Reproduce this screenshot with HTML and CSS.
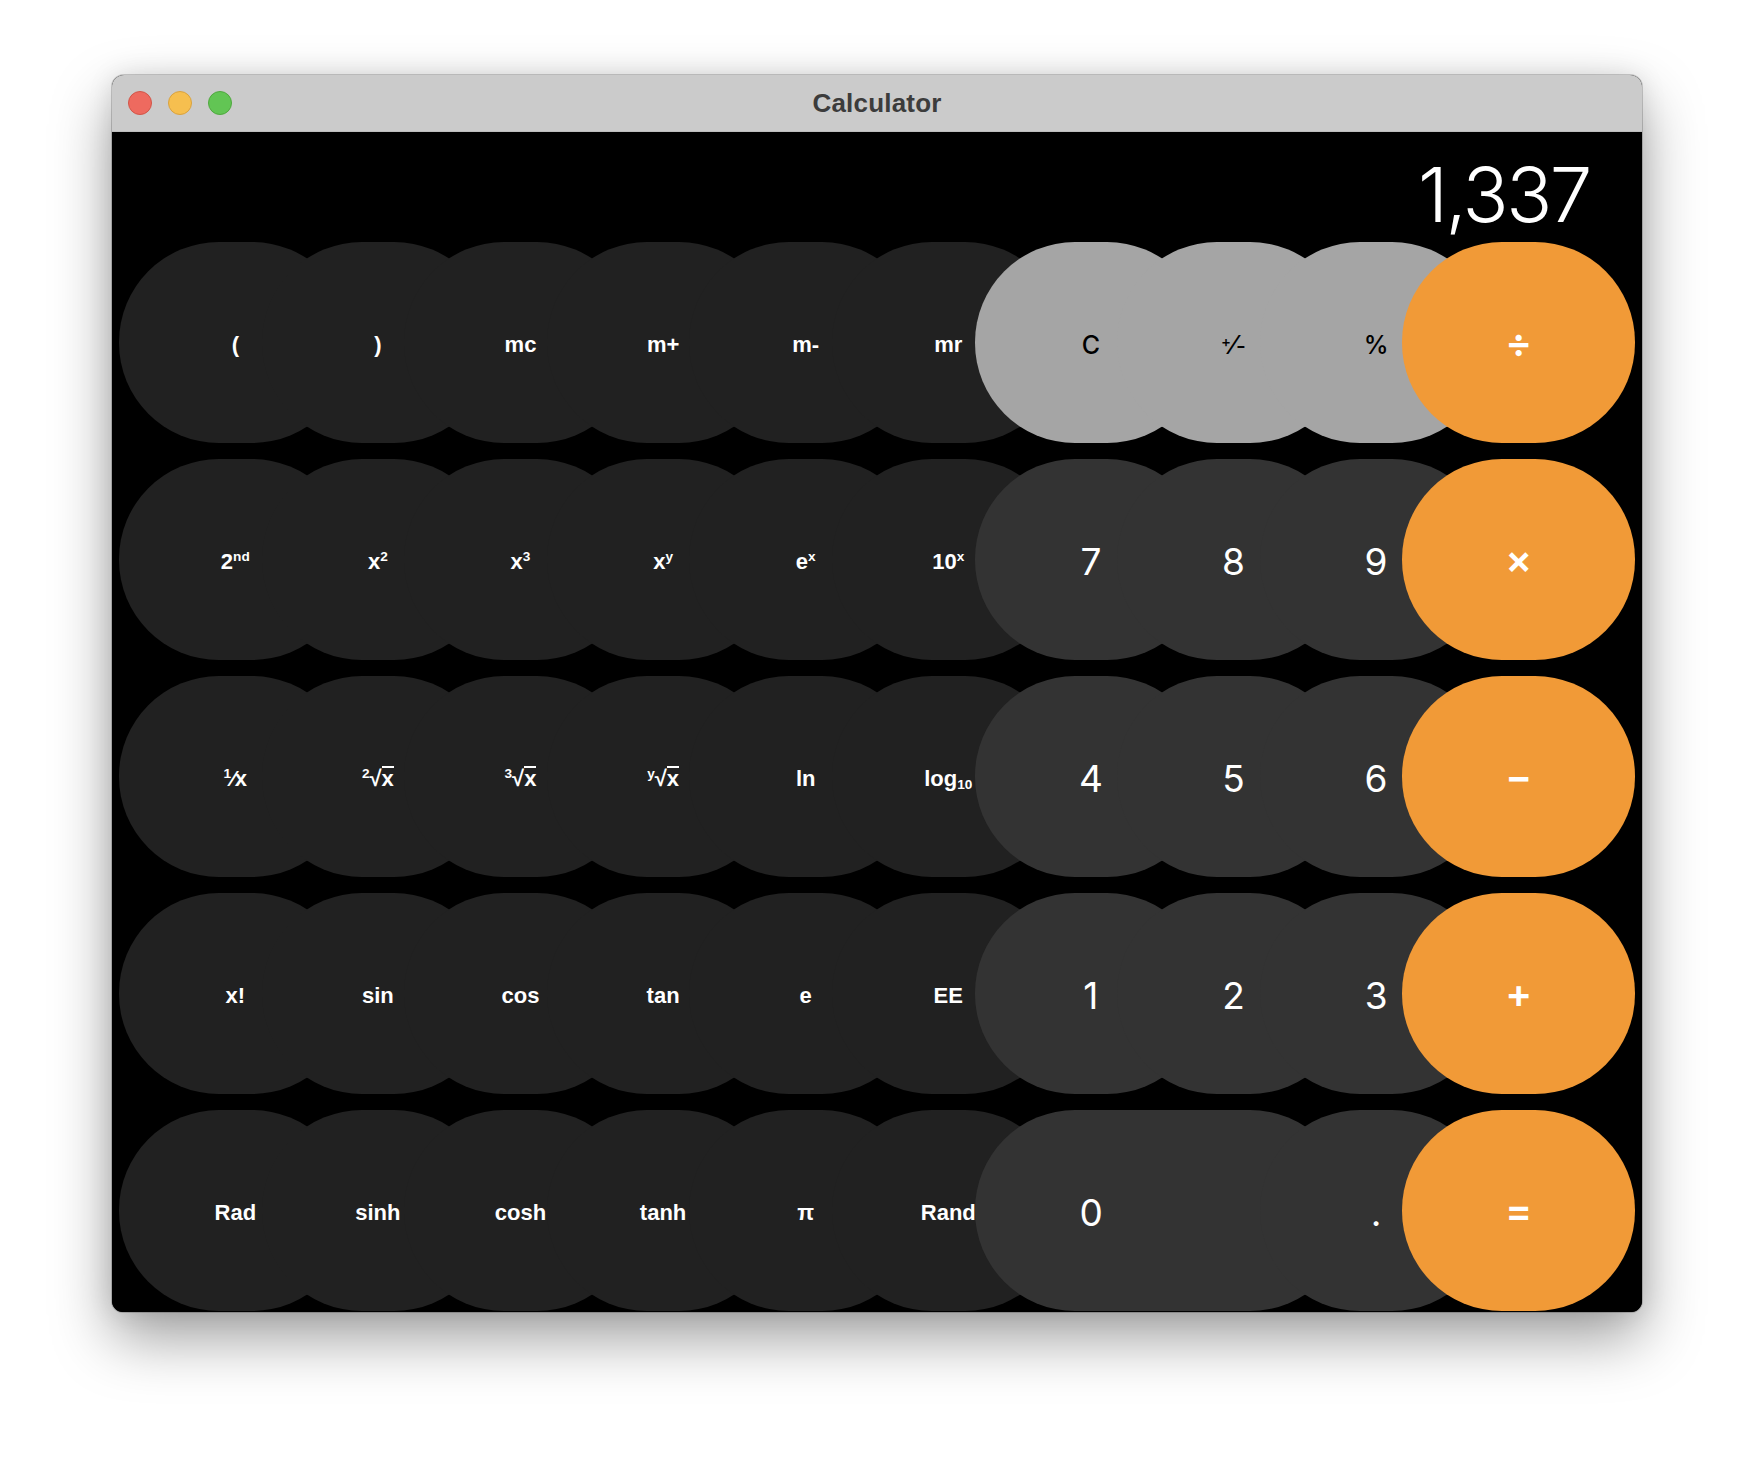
FILE: index.html
```html
<!DOCTYPE html>
<html lang="en">
<head>
<meta charset="utf-8">
<title>Calculator</title>
<link rel="stylesheet" href="styles.css">
</head>
<body>
<div class="window">
  <div class="titlebar">
    <div class="lights">
      <span class="light red"></span>
      <span class="light yellow"></span>
      <span class="light green"></span>
    </div>
    <div class="title">Calculator</div>
    <div class="spacer"></div>
  </div>
  <div class="content">
    <div class="display">1,337</div>
    <div class="keys">
      <div class="key fn"><span class="lbl">(</span></div>
      <div class="key fn"><span class="lbl">)</span></div>
      <div class="key fn"><span class="lbl">mc</span></div>
      <div class="key fn"><span class="lbl">m+</span></div>
      <div class="key fn"><span class="lbl">m-</span></div>
      <div class="key fn"><span class="lbl">mr</span></div>
      <div class="key util"><span class="lbl">C</span></div>
      <div class="key util"><span class="lbl pm"><sup>+</sup>⁄<sub>-</sub></span></div>
      <div class="key util"><span class="lbl">%</span></div>
      <div class="key op"><span class="lbl">÷</span></div>

      <div class="key fn"><span class="lbl">2<sup>nd</sup></span></div>
      <div class="key fn"><span class="lbl">x<sup>2</sup></span></div>
      <div class="key fn"><span class="lbl">x<sup>3</sup></span></div>
      <div class="key fn"><span class="lbl">x<sup>y</sup></span></div>
      <div class="key fn"><span class="lbl">e<sup>x</sup></span></div>
      <div class="key fn"><span class="lbl">10<sup>x</sup></span></div>
      <div class="key num"><span class="lbl">7</span></div>
      <div class="key num"><span class="lbl">8</span></div>
      <div class="key num"><span class="lbl">9</span></div>
      <div class="key op"><span class="lbl">×</span></div>

      <div class="key fn"><span class="lbl"><sup>1</sup>⁄x</span></div>
      <div class="key fn"><span class="lbl"><sup>2</sup>√<span class="ov">x</span></span></div>
      <div class="key fn"><span class="lbl"><sup>3</sup>√<span class="ov">x</span></span></div>
      <div class="key fn"><span class="lbl"><sup>y</sup>√<span class="ov">x</span></span></div>
      <div class="key fn"><span class="lbl">ln</span></div>
      <div class="key fn"><span class="lbl">log<sub>10</sub></span></div>
      <div class="key num"><span class="lbl">4</span></div>
      <div class="key num"><span class="lbl">5</span></div>
      <div class="key num"><span class="lbl">6</span></div>
      <div class="key op"><span class="lbl">−</span></div>

      <div class="key fn"><span class="lbl">x!</span></div>
      <div class="key fn"><span class="lbl">sin</span></div>
      <div class="key fn"><span class="lbl">cos</span></div>
      <div class="key fn"><span class="lbl">tan</span></div>
      <div class="key fn"><span class="lbl">e</span></div>
      <div class="key fn"><span class="lbl">EE</span></div>
      <div class="key num"><span class="lbl">1</span></div>
      <div class="key num"><span class="lbl">2</span></div>
      <div class="key num"><span class="lbl">3</span></div>
      <div class="key op"><span class="lbl">+</span></div>

      <div class="key fn"><span class="lbl">Rad</span></div>
      <div class="key fn"><span class="lbl">sinh</span></div>
      <div class="key fn"><span class="lbl">cosh</span></div>
      <div class="key fn"><span class="lbl">tanh</span></div>
      <div class="key fn"><span class="lbl">π</span></div>
      <div class="key fn"><span class="lbl">Rand</span></div>
      <div class="key num zero"><span class="lbl">0</span></div>
      <div class="key num"><span class="lbl">.</span></div>
      <div class="key op"><span class="lbl">=</span></div>
    </div>
  </div>
</div>
</body>
</html>
```
FILE: styles.css
```css
* { box-sizing: border-box; }

html, body {
  margin: 0;
  padding: 0;
  background: #ffffff;
}

body {
  font-family: "Liberation Sans", Arial, sans-serif;
  width: 1754px;
  height: 1460px;
  overflow: hidden;
}

.window {
  margin: 75px 0 0 112px;
  width: 1530px;
  height: 1237px;
  border-radius: 12px 12px 11px 11px;
  overflow: hidden;
  background: #000;
  box-shadow: 0 0 0 1px rgba(0, 0, 0, 0.18),
              0 26px 60px rgba(0, 0, 0, 0.38),
              0 0 26px rgba(0, 0, 0, 0.10);
}

.titlebar {
  height: 57px;
  background: #cbcbcb;
  display: grid;
  grid-template-columns: 1fr auto 1fr;
  align-items: center;
  border-bottom: 1px solid #bdbdbd;
}

.lights {
  display: flex;
  gap: 16px;
  padding-left: 16px;
}

.light {
  width: 24px;
  height: 24px;
  border-radius: 50%;
  display: block;
}

.red { background: #ee6a5f; border: 1px solid #d25548; }
.yellow { background: #f6bf4f; border: 1px solid #d9a23f; }
.green { background: #62c554; border: 1px solid #50a83f; }

.title {
  font-family: "Liberation Sans", Arial, sans-serif;
  font-weight: 700;
  font-size: 26px;
  color: #3c3c3c;
  letter-spacing: 0.2px;
}

.content {
  height: 1180px;
  background: #000;
  padding: 0 52px;
}

.display {
  height: 110px;
  padding-top: 24px;
  text-align: right;
  font-family: Inter, "Noto Sans", sans-serif;
  font-weight: 300;
  font-size: 76px;
  line-height: 76px;
  color: #ffffff;
  letter-spacing: -2.4px;
}

.keys {
  display: grid;
  grid-template-columns: repeat(10, 1fr);
  grid-auto-rows: 201px;
  row-gap: 16px;
}

.key {
  margin: 0 -45px;
  height: 201px;
  border-radius: 100px;
  display: flex;
  align-items: center;
  justify-content: center;
  padding-top: 4px;
  color: #ffffff;
  white-space: nowrap;
}

.fn {
  background: #212121;
  font-family: "Liberation Sans", Arial, sans-serif;
  font-weight: 700;
  font-size: 22px;
}

.util {
  background: #a5a5a5;
  color: #000;
  font-family: Inter, "Liberation Sans", sans-serif;
  font-weight: 500;
  font-size: 25px;
}

.num {
  background: #333333;
  font-family: Inter, "Liberation Sans", sans-serif;
  font-weight: 400;
  font-size: 37px;
}

.op {
  background: #f19a37;
  font-family: Inter, "Liberation Sans", sans-serif;
  font-weight: 600;
  font-size: 40px;
  padding-top: 0;
}

.zero {
  grid-column: span 2;
  justify-content: flex-start;
}

.zero .lbl {
  width: 233px;
  text-align: center;
}

.lbl {
  display: block;
}

sup {
  font-size: 0.62em;
  line-height: 0;
  vertical-align: 0.6em;
}

sub {
  font-size: 0.62em;
  line-height: 0;
  vertical-align: -0.2em;
}

.pm sup {
  font-size: 0.6em;
  vertical-align: 0.45em;
}

.pm sub {
  font-size: 0.85em;
  vertical-align: 0;
}

.ov {
  display: inline-block;
  border-top: 2px solid #ffffff;
  line-height: 1;
  padding-top: 0;
}
```
